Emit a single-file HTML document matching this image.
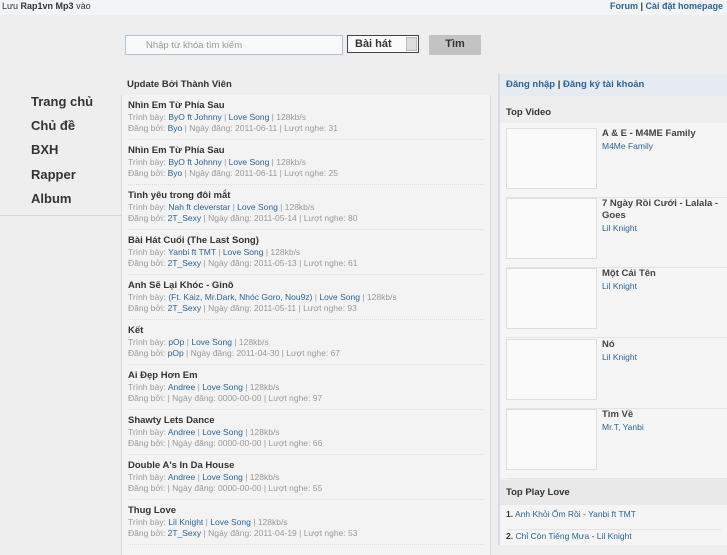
<!DOCTYPE html>
<html><head><meta charset="utf-8"><style>
*{margin:0;padding:0;box-sizing:border-box}
body{width:727px;height:545px;overflow:hidden;background:#eeeeee;font-family:"Liberation Sans",sans-serif;font-size:9px;color:#333;position:relative}
a{color:#2a6496;text-decoration:none}
.abs{position:absolute}
.top{left:0;top:0;width:727px;height:15px;background:#f3f4f6}
.nav div{position:absolute;left:31px;font-size:13px;font-weight:bold;color:#333}
.main{left:121px;top:95px;width:370px;height:460px;background:#f3f3f3;border-left:1px solid #d8dde3;border-right:1px solid #d8dde3}
.item{position:absolute;left:6px;width:355px;height:45px;border-bottom:1px dotted #ddd}
.item b{display:block;font-size:9.5px;color:#333;margin-top:5px;height:12px}
.item .l{color:#999;font-size:8.5px;line-height:11px}
.right{left:498px;top:73px;width:229px;height:472px;border-left:2px solid #d8dde3}
.vid{position:absolute;left:6px;width:222px;height:70px;border-bottom:1px solid #e4e4e4}
.vid .th{position:absolute;left:0;top:0;width:91px;height:61px;border:1px solid #ddd;background:#fafafa}
.vid .t{position:absolute;left:96px;top:0;width:128px;font-size:9.5px;font-weight:bold;color:#444;line-height:12px}
.vid .t a{font-weight:normal;font-size:8.5px}
</style></head><body>
<div class="abs top"></div>
<div class="abs" style="left:2px;top:1px">Lưu <b>Rap1vn Mp3</b> vào</div>
<div class="abs" style="right:4px;top:1px;font-weight:bold"><a>Forum</a> | <a>Cài đặt homepage</a></div>

<div class="abs" style="left:125px;top:35px;width:218px;height:20px;border:1px solid #a9c4dc;background:#f9f9f9;color:#999;font-size:9.5px;padding:4px 0 0 20px">Nhập từ khóa tìm kiếm</div>
<div class="abs" style="left:347px;top:35px;width:72px;height:18px;border:1px solid #444;background:#fafafa;font-size:11px;font-weight:bold;padding:2px 0 0 7px">Bài hát<span style="position:absolute;right:1px;top:1px;width:11px;height:14px;background:#ddd;border:1px solid #bbb"></span></div>
<div class="abs" style="left:429px;top:35px;width:52px;height:20px;background:#c3c3c3;font-size:11px;font-weight:bold;text-align:center;padding-top:3px">Tìm</div>

<div class="nav">
<div style="top:94px">Trang chủ</div><div style="top:118px">Chủ đề</div><div style="top:142px">BXH</div><div style="top:167px">Rapper</div><div style="top:191px">Album</div>
</div>
<div class="abs" style="left:0;top:215px;width:121px;border-top:1px solid #cdd6df"></div>

<div class="abs" style="left:127px;top:79px;font-weight:bold;font-size:9.5px">Update Bởi Thành Viên</div>
<div class="abs main">
<div class="item" style="top:0"><b>Nhìn Em Từ Phía Sau</b><div class="l">Trình bày: <a>ByO ft Johnny</a> | <a>Love Song</a> | 128kb/s</div><div class="l">Đăng bởi: <a>Byo</a> | Ngày đăng: 2011-06-11 | Lượt nghe: 31</div></div>
<div class="item" style="top:45px"><b>Nhìn Em Từ Phía Sau</b><div class="l">Trình bày: <a>ByO ft Johnny</a> | <a>Love Song</a> | 128kb/s</div><div class="l">Đăng bởi: <a>Byo</a> | Ngày đăng: 2011-06-11 | Lượt nghe: 25</div></div>
<div class="item" style="top:90px"><b>Tình yêu trong đôi mắt</b><div class="l">Trình bày: <a>Nah ft cleverstar</a> | <a>Love Song</a> | 128kb/s</div><div class="l">Đăng bởi: <a>2T_Sexy</a> | Ngày đăng: 2011-05-14 | Lượt nghe: 80</div></div>
<div class="item" style="top:135px"><b>Bài Hát Cuối (The Last Song)</b><div class="l">Trình bày: <a>Yanbi ft TMT</a> | <a>Love Song</a> | 128kb/s</div><div class="l">Đăng bởi: <a>2T_Sexy</a> | Ngày đăng: 2011-05-13 | Lượt nghe: 61</div></div>
<div class="item" style="top:180px"><b>Anh Sẽ Lại Khóc - Ginô</b><div class="l">Trình bày: <a>(Ft. Kaiz, Mr.Dark, Nhóc Goro, Nou9z)</a> | <a>Love Song</a> | 128kb/s</div><div class="l">Đăng bởi: <a>2T_Sexy</a> | Ngày đăng: 2011-05-11 | Lượt nghe: 93</div></div>
<div class="item" style="top:225px"><b>Kết</b><div class="l">Trình bày: <a>pOp</a> | <a>Love Song</a> | 128kb/s</div><div class="l">Đăng bởi: <a>pOp</a> | Ngày đăng: 2011-04-30 | Lượt nghe: 67</div></div>
<div class="item" style="top:270px"><b>Ai Đẹp Hơn Em</b><div class="l">Trình bày: <a>Andree</a> | <a>Love Song</a> | 128kb/s</div><div class="l">Đăng bởi: | Ngày đăng: 0000-00-00 | Lượt nghe: 97</div></div>
<div class="item" style="top:315px"><b>Shawty Lets Dance</b><div class="l">Trình bày: <a>Andree</a> | <a>Love Song</a> | 128kb/s</div><div class="l">Đăng bởi: | Ngày đăng: 0000-00-00 | Lượt nghe: 66</div></div>
<div class="item" style="top:360px"><b>Double A's In Da House</b><div class="l">Trình bày: <a>Andree</a> | <a>Love Song</a> | 128kb/s</div><div class="l">Đăng bởi: | Ngày đăng: 0000-00-00 | Lượt nghe: 55</div></div>
<div class="item" style="top:405px"><b>Thug Love</b><div class="l">Trình bày: <a>Lil Knight</a> | <a>Love Song</a> | 128kb/s</div><div class="l">Đăng bởi: <a>2T_Sexy</a> | Ngày đăng: 2011-04-19 | Lượt nghe: 53</div></div>
</div>

<div class="abs" style="left:500px;top:75px;width:227px;height:21px;background:#e6ebf1;padding:4px 0 0 6px;font-weight:bold;font-size:9.5px"><a>Đăng nhập</a> | <a>Đăng ký tài khoản</a></div>
<div class="abs right">
<div class="abs" style="left:0;top:50px;width:229px;height:355px;background:#f5f5f5"></div>
<div class="abs" style="left:6px;top:34px;font-weight:bold;font-size:9.5px">Top Video</div>
<div class="vid" style="top:55px"><div class="th"></div><div class="t">A &amp; E - M4ME Family<br><a>M4Me Family</a></div></div>
<div class="vid" style="top:125px"><div class="th"></div><div class="t">7 Ngày Rồi Cưới - Lalala - Goes<br><a>Lil Knight</a></div></div>
<div class="vid" style="top:195px"><div class="th"></div><div class="t">Một Cái Tên<br><a>Lil Knight</a></div></div>
<div class="vid" style="top:266px"><div class="th"></div><div class="t">Nó<br><a>Lil Knight</a></div></div>
<div class="vid" style="top:336px"><div class="th"></div><div class="t">Tìm Về<br><a>Mr.T, Yanbi</a></div></div>
<div class="abs" style="left:0;top:407px;width:229px;height:25px;background:#e8e8e8;padding:7px 0 0 6px;font-weight:bold;font-size:9.5px">Top Play Love</div>
<div class="abs" style="left:0;top:432px;width:229px;height:40px;background:#f5f5f5"></div>
<div class="abs" style="left:6px;top:436px;width:215px;height:21px;border-bottom:1px solid #e4e4e4;font-size:8.5px"><b>1.</b> <a>Anh Khỏi Ốm Rồi</a> - <a>Yanbi ft TMT</a></div>
<div class="abs" style="left:6px;top:458px;font-size:8.5px"><b>2.</b> <a>Chỉ Còn Tiếng Mưa</a> - <a>Lil Knight</a></div>
</div>
</body></html>
